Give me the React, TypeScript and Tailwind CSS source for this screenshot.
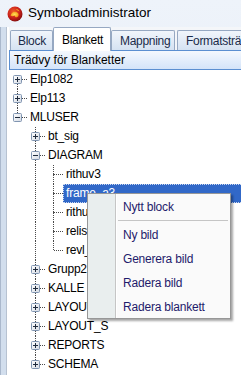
import React from "react";

type Node = {
  label: string;
  level: number;
  kind: "plus" | "minus" | "leaf";
  last: boolean;
  // for each ancestor level below this one: does its line continue?
  guides: boolean[];
  selected?: boolean;
};

const rows: Node[] = [
  { label: "Elp1082", level: 0, kind: "plus", last: false, guides: [] },
  { label: "Elp113", level: 0, kind: "plus", last: false, guides: [] },
  { label: "MLUSER", level: 0, kind: "minus", last: true, guides: [] },
  { label: "bt_sig", level: 1, kind: "plus", last: false, guides: [false] },
  { label: "DIAGRAM", level: 1, kind: "minus", last: false, guides: [false] },
  { label: "rithuv3", level: 2, kind: "leaf", last: false, guides: [false, true] },
  { label: "frame_a3", level: 2, kind: "leaf", last: false, guides: [false, true], selected: true },
  { label: "rithuv4", level: 2, kind: "leaf", last: false, guides: [false, true] },
  { label: "relista", level: 2, kind: "leaf", last: false, guides: [false, true] },
  { label: "revl_a3", level: 2, kind: "leaf", last: true, guides: [false, true] },
  { label: "Grupp2", level: 1, kind: "plus", last: false, guides: [false] },
  { label: "KALLE", level: 1, kind: "plus", last: false, guides: [false] },
  { label: "LAYOUT", level: 1, kind: "plus", last: false, guides: [false] },
  { label: "LAYOUT_S", level: 1, kind: "plus", last: false, guides: [false] },
  { label: "REPORTS", level: 1, kind: "plus", last: false, guides: [false] },
  { label: "SCHEMA", level: 1, kind: "plus", last: true, guides: [false] },
];

function Expander({ open }: { open: boolean }) {
  return (
    <svg width="9" height="9" viewBox="0 0 9 9" className="absolute left-[4px] top-[5px]">
      <defs>
        <linearGradient id="exp" x1="0" y1="0" x2="1" y2="1">
          <stop offset="0" stopColor="#ffffff" />
          <stop offset="1" stopColor="#d4dae3" />
        </linearGradient>
      </defs>
      <rect x="0.5" y="0.5" width="8" height="8" rx="1" fill="url(#exp)" stroke="#8095b1" />
      <rect x="2" y="4" width="5" height="1" fill="#1e2a3c" />
      {!open && <rect x="4" y="2" width="1" height="5" fill="#1e2a3c" />}
    </svg>
  );
}

function TreeRow({ node }: { node: Node }) {
  return (
    <div className="flex h-[19px]">
      {node.guides.map((on, i) => (
        <div key={i} className="relative w-[18px] shrink-0">
          {on && <div className="absolute left-[8px] top-0 h-full border-l border-dotted border-[#4a4a4a]" />}
        </div>
      ))}
      <div className="relative w-[18px] shrink-0">
        {!(node.level === 0 && node.label === "Elp1082") && (
          <div className="absolute left-[8px] top-0 h-[9px] border-l border-dotted border-[#4a4a4a]" />
        )}
        {!node.last && (
          <div className="absolute left-[8px] top-[9px] h-[10px] border-l border-dotted border-[#4a4a4a]" />
        )}
        <div className="absolute left-[9px] top-[9px] w-[9px] border-t border-dotted border-[#4a4a4a]" />
        {node.kind !== "leaf" && <Expander open={node.kind === "minus"} />}
      </div>
      {node.selected ? (
        <div className="ml-0 mr-[5px] flex-1 bg-[#3168c8] outline outline-1 outline-dotted outline-[#c9d6ee] -outline-offset-1 pl-[3px] text-white leading-[19px]">
          {node.label}
        </div>
      ) : (
        <div className="pl-[3px] leading-[19px] text-black">{node.label}</div>
      )}
    </div>
  );
}

function AppIcon() {
  return (
    <svg width="16" height="16" viewBox="0 0 16 16">
      <defs>
        <radialGradient id="ball" cx="0.4" cy="0.35" r="0.7">
          <stop offset="0" stopColor="#f05a2a" />
          <stop offset="0.6" stopColor="#c8201a" />
          <stop offset="1" stopColor="#7a0c0c" />
        </radialGradient>
        <radialGradient id="flame" cx="0.5" cy="0.5" r="0.5">
          <stop offset="0" stopColor="#ffe35a" />
          <stop offset="1" stopColor="#f39a1c" />
        </radialGradient>
      </defs>
      <circle cx="8" cy="8" r="7.5" fill="url(#ball)" />
      <path d="M3.5 9.5 C4.5 6 7 5 9.5 6 C11 6.6 12.5 8.5 11 10.5 C9.8 12 7.5 11 7.8 9.4 C6.5 10.2 5 10.8 3.5 9.5 Z" fill="url(#flame)" />
      <path d="M9 3 C10.5 3.2 12 4.2 12.5 5.5 C11.2 4.8 10 4.4 9 3 Z" fill="#f5b02a" />
    </svg>
  );
}

const menuItems = ["Ny bild", "Generera bild", "Radera bild", "Radera blankett"];

export default function App() {
  return (
    <div className="relative h-[375px] w-[241px] overflow-hidden bg-gradient-to-b from-[#eef3fa] to-[#dfe8f4] font-['Liberation_Sans',Arial,sans-serif] text-[12px]">
      {/* title bar */}
      <div className="flex h-[27px] items-center pl-[7px]">
        <AppIcon />
        <span className="ml-[5px] text-[13.5px] text-black">Symboladministrator</span>
      </div>

      <div className="flex h-[348px]">
        <div className="w-[6px] shrink-0 border-l border-[#aab8cc] bg-[#d2deed]" />
        <div className="flex-1 border-l border-[#b7c2d1] bg-white pl-[2px]">
          {/* tabs */}
          <div className="flex h-[23px] items-end bg-[#f4f6f9] pl-[1px]">
            <div className="flex h-[20px] w-[43px] shrink-0 items-center rounded-t-[2px] border border-b-0 border-[#96a8c2] bg-gradient-to-b from-[#f1f5fb] to-[#d5e2f2] pl-[7px] text-[#1a2b4a] tracking-[-0.3px]">
              Block
            </div>
            <div className="z-10 -mb-px flex h-[24px] w-[58px] shrink-0 items-center rounded-t-[2px] border border-b-0 border-[#96a8c2] bg-white pl-[8px] text-black tracking-[-0.3px]">
              Blankett
            </div>
            <div className="flex h-[20px] w-[64px] shrink-0 items-center rounded-t-[2px] border border-b-0 border-[#96a8c2] bg-gradient-to-b from-[#f1f5fb] to-[#d5e2f2] pl-[8px] text-[#1a2b4a] tracking-[-0.3px]">
              Mappning
            </div>
            <div className="ml-[2px] flex h-[20px] flex-1 items-center overflow-hidden whitespace-nowrap rounded-tl-[2px] border border-r-0 border-b-0 border-[#96a8c2] bg-gradient-to-b from-[#f1f5fb] to-[#d5e2f2] pl-[8px] text-[#1a2b4a] tracking-[-0.3px]">
              Formatsträngar
            </div>
          </div>

          {/* header */}
          <div className="flex h-[20px] items-center border border-[#5b8fd1] bg-gradient-to-b from-[#f4f8fe] to-[#d4e4f9] pl-[4px] text-black">
            Trädvy för Blanketter
          </div>

          {/* tree */}
          <div className="tracking-[-0.2px]">
            {rows.map((r) => (
              <TreeRow key={r.label} node={r} />
            ))}
          </div>
        </div>
      </div>

      {/* context menu */}
      <div className="absolute left-[87px] top-[193px] flex h-[126px] w-[144px] border border-[#979797] bg-[#fafafa] shadow-[2px_2px_2px_rgba(0,0,0,0.35)]">
        <div className="w-[28px] shrink-0 border-r border-[#c5c5c5] bg-[#e9eeee]" />
        <div className="flex-1 border-l border-white pt-[1px] text-[#1f1b6b] tracking-[-0.2px]">
          <div className="flex h-[24px] items-center pl-[6px]">Nytt block</div>
          <div className="ml-[1px] mr-[2px] my-[1px] h-[1px] bg-[#c5c5c5]" />
          <div className="h-[1px]" />
          {menuItems.map((m) => (
            <div key={m} className="flex h-[24px] items-center pl-[6px]">
              {m}
            </div>
          ))}
        </div>
      </div>
    </div>
  );
}
